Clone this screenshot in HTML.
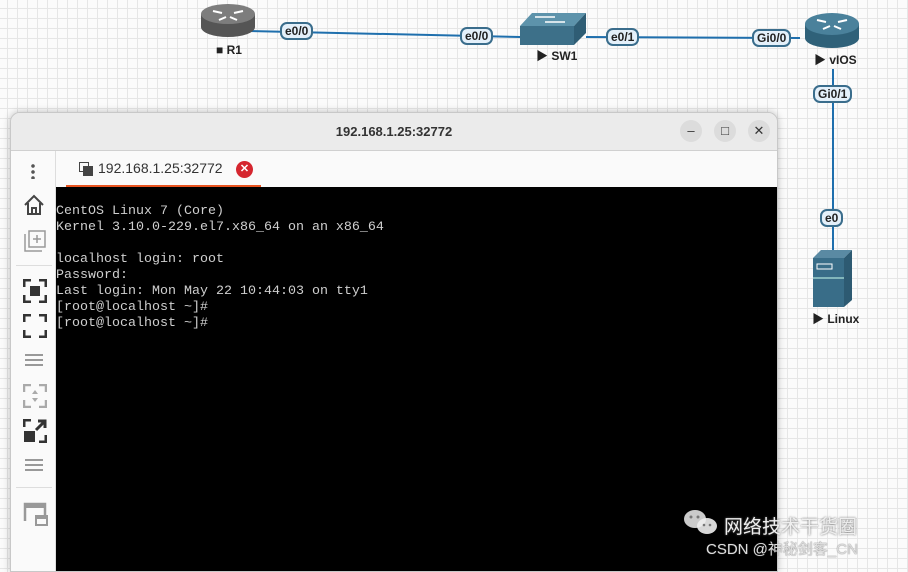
<!DOCTYPE html>
<html><head><meta charset="utf-8"><style>
*{margin:0;padding:0;box-sizing:border-box}
body{width:908px;height:566px;overflow:hidden;position:relative;font-family:"Liberation Sans","Noto Sans CJK SC",sans-serif;
background-color:#fbfbfb;background-image:linear-gradient(#e6e6e6 1px,transparent 1px),linear-gradient(90deg,#e6e6e6 1px,transparent 1px);background-size:10px 10px;background-position:-3px -2px}
.lbl{position:absolute;font-size:12px;font-weight:bold;color:#222;background:#e4f0fa;border:2px solid #3a6d8c;border-radius:7px;padding:0 3px;line-height:14px}
.name{position:absolute;font-size:12px;font-weight:bold;color:#222}
.win{position:absolute;left:10px;top:112px;width:768px;height:460px;background:#fafafa;border:1px solid #c8c8c8;border-radius:10px 10px 0 0;overflow:hidden;box-shadow:0 0 8px rgba(0,0,0,.25)}
.title{height:38px;background:#ebebeb;border-bottom:1px solid #d0d0d0;text-align:center;font-weight:bold;font-size:13px;line-height:38px;color:#333}
.wb{position:absolute;top:7px;width:22px;height:22px;border-radius:11px;background:#dcdcdc;text-align:center;line-height:22px;font-size:13px;color:#333}
.side{position:absolute;left:0;top:38px;width:45px;bottom:0;background:#fafafa;border-right:1px solid #ddd}
.term{position:absolute;left:45px;top:74px;right:0;bottom:0;background:#000;color:#cfcfcf;font-family:"Liberation Mono",monospace;font-size:13.33px;line-height:16px;padding:17px 0 0 0;white-space:pre}
.ic{position:absolute;left:12px}
</style></head><body>
<svg width="908" height="566" style="position:absolute;left:0;top:0">
<line x1="248" y1="31" x2="520" y2="37" stroke="#1f6fad" stroke-width="2"/>
<line x1="586" y1="37" x2="800" y2="38" stroke="#1f6fad" stroke-width="2"/>
<line x1="833" y1="69" x2="833" y2="250" stroke="#1f6fad" stroke-width="2"/>
<!-- R1 -->
<ellipse cx="228" cy="27" rx="27" ry="10" fill="#555"/><rect x="201" y="14" width="54" height="13" fill="#555"/>
<ellipse cx="228" cy="14" rx="27" ry="10" fill="#7d7d7d"/>
<path d="M213 11l9 2M243 11l-9 2M219 20l7-3M237 20l-7-3" stroke="#fff" stroke-width="2"/>
<!-- SW1 -->
<polygon points="520,26 532,13 586,13 574,26" fill="#5d93ab"/>
<polygon points="574,26 586,13 586,33 574,45" fill="#2f5d74"/>
<rect x="520" y="26" width="54" height="19" fill="#3d7089"/>
<path d="M535 17h20M545 22h20" stroke="#fff" stroke-width="1.5"/>
<!-- vIOS -->
<ellipse cx="832" cy="38" rx="27" ry="10" fill="#2f6179"/><rect x="805" y="24" width="54" height="14" fill="#2f6179"/>
<ellipse cx="832" cy="24" rx="27" ry="11" fill="#4a819b"/>
<path d="M817 20l9 2M847 20l-9 2M823 29l7-3M841 29l-7-3" stroke="#fff" stroke-width="2"/>
<!-- Linux server -->
<polygon points="813,258 821,250 852,250 844,258" fill="#5a8aa3"/>
<polygon points="844,258 852,250 852,300 844,307" fill="#2d5a72"/>
<rect x="813" y="258" width="31" height="49" fill="#396d88"/>
<rect x="817" y="264" width="15" height="5" fill="none" stroke="#fff" stroke-width="1"/>
<line x1="813" y1="278" x2="844" y2="278" stroke="#cfe" stroke-width="1"/>
</svg>
<div class="lbl" style="left:280px;top:22px">e0/0</div>
<div class="lbl" style="left:460px;top:27px">e0/0</div>
<div class="lbl" style="left:606px;top:28px">e0/1</div>
<div class="lbl" style="left:752px;top:29px">Gi0/0</div>
<div class="lbl" style="left:813px;top:85px">Gi0/1</div>
<div class="lbl" style="left:820px;top:209px">e0</div>
<div class="name" style="left:216px;top:43px">■ R1</div>
<div class="name" style="left:536px;top:47px">▶ SW1</div>
<div class="name" style="left:814px;top:51px">▶ vIOS</div>
<div class="name" style="left:812px;top:310px">▶ Linux</div>

<div class="win">
<div class="title">192.168.1.25:32772</div>
<div class="wb" style="left:669px">–</div>
<div class="wb" style="left:703px">□</div>
<div class="wb" style="left:737px">✕</div>
<div class="side">
<div style="position:absolute;left:20px;top:12px;width:4px;height:16px;background:radial-gradient(circle,#555 1.6px,transparent 2px) 0 0/4px 6px"></div>
<svg class="ic" style="top:43px" width="22" height="22"><path d="M2 11L11 2 20 11M5 9v11h12V9M9 20v-6h4v6" fill="none" stroke="#444" stroke-width="2"/></svg>
<svg class="ic" style="top:78px" width="24" height="24"><path d="M2 5v17h17" fill="none" stroke="#999" stroke-width="1.5"/><rect x="6" y="2" width="16" height="16" fill="none" stroke="#999" stroke-width="1.5"/><path d="M14 6v8M10 10h8" stroke="#999" stroke-width="1.5"/></svg>
<div style="position:absolute;left:5px;top:114px;width:36px;height:1px;background:#ddd"></div>
<svg class="ic" style="top:128px" width="24" height="24"><path d="M1 8V1h7M16 1h7v7M23 16v7h-7M8 23H1v-7" fill="none" stroke="#333" stroke-width="3"/><rect x="7" y="7" width="10" height="10" fill="#333"/></svg>
<svg class="ic" style="top:163px" width="24" height="24"><path d="M1 8V1h7M16 1h7v7M23 16v7h-7M8 23H1v-7" fill="none" stroke="#333" stroke-width="3"/></svg>
<svg class="ic" style="top:201px" width="22" height="16"><path d="M2 3h18M2 8h18M2 13h18" stroke="#999" stroke-width="2"/></svg>
<svg class="ic" style="top:233px" width="24" height="24"><path d="M1 8V1h7M16 1h7v7M23 16v7h-7M8 23H1v-7" fill="none" stroke="#aaa" stroke-width="2.5"/><path d="M12 6l3 4H9zM12 18l3-4H9z" fill="#aaa"/></svg>
<svg class="ic" style="top:268px" width="24" height="24"><path d="M1 8V1h7M23 16v7h-7" fill="none" stroke="#333" stroke-width="3"/><rect x="1" y="12" width="11" height="11" fill="#333"/><path d="M13 11L22 2M15 2h7v7" fill="none" stroke="#333" stroke-width="3"/></svg>
<svg class="ic" style="top:306px" width="22" height="16"><path d="M2 3h18M2 8h18M2 13h18" stroke="#999" stroke-width="2"/></svg>
<div style="position:absolute;left:5px;top:336px;width:36px;height:1px;background:#ddd"></div>
<svg class="ic" style="top:350px" width="26" height="26"><path d="M2 20V3h20v12" fill="none" stroke="#999" stroke-width="2.5"/><rect x="2" y="3" width="20" height="4" fill="#999"/><rect x="13" y="15" width="11" height="9" fill="none" stroke="#999" stroke-width="2"/><rect x="13" y="15" width="11" height="3" fill="#999"/></svg>
</div>
<div style="position:absolute;left:45px;top:38px;right:0;height:36px;background:#fafafa">
<div style="position:absolute;left:10px;top:34px;width:195px;height:3px;background:#e95420"></div>
<svg style="position:absolute;left:23px;top:11px" width="15" height="15"><rect x="0.5" y="0.5" width="9" height="9" fill="none" stroke="#444"/><rect x="4" y="4" width="10" height="10" fill="#444"/></svg>
<div style="position:absolute;left:42px;top:9px;font-size:14px;color:#333">192.168.1.25:32772</div>
<div style="position:absolute;left:180px;top:10px;width:17px;height:17px;border-radius:9px;background:#d5262f;color:#fff;font-size:11px;font-weight:bold;text-align:center;line-height:17px">✕</div>
</div>
<div class="term">CentOS Linux 7 (Core)
Kernel 3.10.0-229.el7.x86_64 on an x86_64

localhost login: root
Password:
Last login: Mon May 22 10:44:03 on tty1
[root@localhost ~]#
[root@localhost ~]#</div>
</div>

<svg style="position:absolute;left:683px;top:508px" width="36" height="28"><ellipse cx="12" cy="11" rx="11" ry="9" fill="#eee" opacity=".85"/><ellipse cx="24" cy="18" rx="10" ry="8" fill="#eee" opacity=".9"/><circle cx="8" cy="9" r="1.5" fill="#777"/><circle cx="15" cy="9" r="1.5" fill="#777"/><circle cx="21" cy="17" r="1.3" fill="#777"/><circle cx="27" cy="17" r="1.3" fill="#777"/></svg>
<div style="position:absolute;left:724px;top:512px;font-size:19px;color:#eee;text-shadow:0 0 2px #666">网络技术干货圈</div>
<div style="position:absolute;left:706px;top:538px;font-size:15px;color:#ddd;text-shadow:0 0 1px #555">CSDN @神秘剑客_CN</div>
</body></html>
